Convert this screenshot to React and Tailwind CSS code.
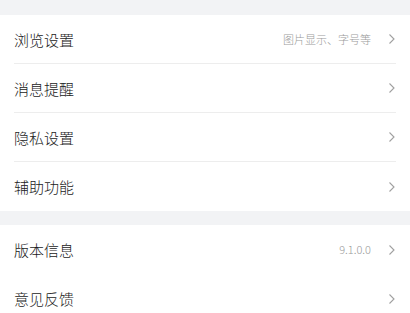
import React from "react";

function Chevron() {
  return (
    <svg width="8" height="12" viewBox="0 0 8 12" className="shrink-0">
      <path d="M1.5 1.5 L6 6 L1.5 10.5" fill="none" stroke="#a0a0a0" strokeWidth="1.1" />
    </svg>
  );
}

function Row({ title, extra, divider }) {
  return (
    <div className="px-[14px]">
      <div className={"flex items-center h-[49px] " + (divider ? "border-b border-[#ededed]" : "")}>
        <span className="text-[15px] text-[#1a1a1a] font-light flex-1 leading-none">{title}</span>
        {extra && <span className="text-[11px] text-[#9a9a9a] font-light mr-[17px] leading-none">{extra}</span>}
        <Chevron />
      </div>
    </div>
  );
}

export default function App() {
  return (
    <div
      className="w-[410px] h-[313px] overflow-hidden bg-[#f2f3f5]"
      style={{ fontFamily: '"Noto Sans CJK SC", "Noto Sans", sans-serif' }}
    >
      <div className="h-[15px]" />
      <div className="bg-white">
        <Row title="浏览设置" extra="图片显示、字号等" divider />
        <Row title="消息提醒" divider />
        <Row title="隐私设置" divider />
        <Row title="辅助功能" />
      </div>
      <div className="h-[14px]" />
      <div className="bg-white">
        <Row title="版本信息" extra="9.1.0.0" />
        <Row title="意见反馈" />
      </div>
    </div>
  );
}
